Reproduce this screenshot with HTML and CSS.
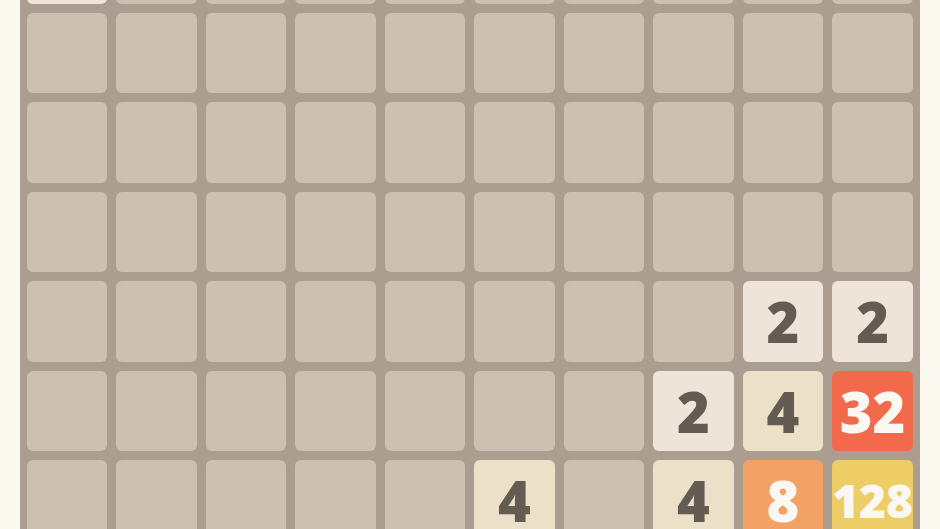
FILE: index.html
```html
<!DOCTYPE html>
<html lang="en">
<head>
  <meta charset="UTF-8" />
  <meta name="viewport" content="width=device-width, initial-scale=1.0"/>
  <title>2048</title>
  <link rel="stylesheet" href="styles.css">
</head>
<body>

  <!-- Game board: 10 columns -->
  <div class="board">
    <!-- row 1 -->
    <div class="cell tile-2"></div><div class="cell"></div><div class="cell"></div><div class="cell"></div><div class="cell"></div>
    <div class="cell"></div><div class="cell"></div><div class="cell"></div><div class="cell"></div><div class="cell"></div>
    <!-- row 2 -->
    <div class="cell"></div><div class="cell"></div><div class="cell"></div><div class="cell"></div><div class="cell"></div>
    <div class="cell"></div><div class="cell"></div><div class="cell"></div><div class="cell"></div><div class="cell"></div>
    <!-- row 3 -->
    <div class="cell"></div><div class="cell"></div><div class="cell"></div><div class="cell"></div><div class="cell"></div>
    <div class="cell"></div><div class="cell"></div><div class="cell"></div><div class="cell"></div><div class="cell"></div>
    <!-- row 4 -->
    <div class="cell"></div><div class="cell"></div><div class="cell"></div><div class="cell"></div><div class="cell"></div>
    <div class="cell"></div><div class="cell"></div><div class="cell"></div><div class="cell"></div><div class="cell"></div>
    <!-- row 5 -->
    <div class="cell"></div><div class="cell"></div><div class="cell"></div><div class="cell"></div><div class="cell"></div>
    <div class="cell"></div><div class="cell"></div><div class="cell"></div>
    <div class="cell tile-2">2</div><div class="cell tile-2">2</div>
    <!-- row 6 -->
    <div class="cell"></div><div class="cell"></div><div class="cell"></div><div class="cell"></div><div class="cell"></div>
    <div class="cell"></div><div class="cell"></div>
    <div class="cell tile-2">2</div><div class="cell tile-4">4</div><div class="cell tile-32">32</div>
    <!-- row 7 -->
    <div class="cell"></div><div class="cell"></div><div class="cell"></div><div class="cell"></div><div class="cell"></div>
    <div class="cell tile-4">4</div><div class="cell"></div>
    <div class="cell tile-4">4</div><div class="cell tile-8">8</div><div class="cell tile-128">128</div>
  </div>

</body>
</html>
```

FILE: styles.css
```css
body {
  margin: 0;
  background: #faf8ef;
  font-family: 'Open Sans', 'DejaVu Sans', sans-serif;
  overflow: hidden;
}
.board {
  box-sizing: border-box;
  width: 900px;
  margin: -84px 0 0 20px;
  padding: 7px;
  display: grid;
  grid-template-columns: repeat(10, 1fr);
  grid-auto-rows: 80.5px;
  gap: 9px;
  background: #ab9e91;
  border-radius: 6px;
}
.cell {
  background: #ccc0b3;
  border-radius: 6px;
  display: flex;
  align-items: center;
  justify-content: center;
  font-size: 56px;
  font-weight: 800;
  line-height: 1;
  color: #645b53;
}
.tile-2 { background: #eee4da; }
.tile-4 { background: #ede0c8; }
.tile-8 { background: #f3a266; color: #fbf8f3; }
.tile-32 { background: #f2694c; color: #fbf8f3; }
.tile-128 {
  background: #eecd67;
  color: #fbf8f3;
  font-size: 46px;
}
```
